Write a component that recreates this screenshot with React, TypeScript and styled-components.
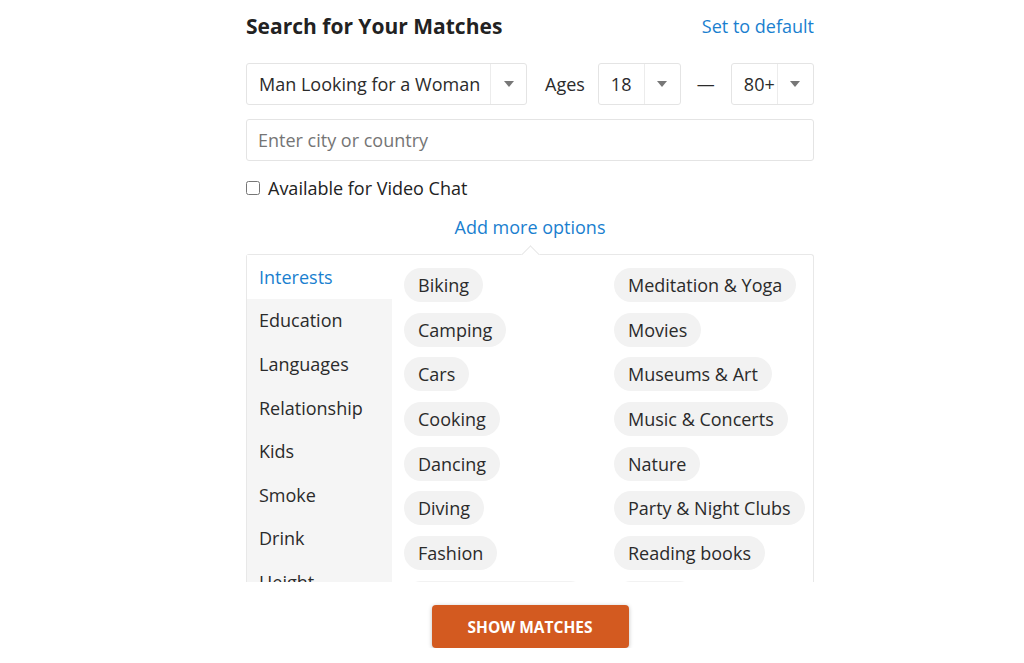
import React from 'react';
import styled, { createGlobalStyle } from 'styled-components';

const GlobalStyle = createGlobalStyle`
  html, body {
    margin: 0;
    padding: 0;
    background: #ffffff;
    font-family: "Open Sans", "Liberation Sans", sans-serif;
    color: #2b2b2b;
  }
`;

const categories = [
  'Interests',
  'Education',
  'Languages',
  'Relationship',
  'Kids',
  'Smoke',
  'Drink',
  'Height',
  'Body type',
];

const leftInterests = [
  'Biking',
  'Camping',
  'Cars',
  'Cooking',
  'Dancing',
  'Diving',
  'Fashion',
  'Fitness & Wellness',
];

const rightInterests = [
  'Meditation & Yoga',
  'Movies',
  'Museums & Art',
  'Music & Concerts',
  'Nature',
  'Party & Night Clubs',
  'Reading books',
  'Sailing',
];

const Caret = () => (
  <svg width="10" height="6" viewBox="0 0 10 6">
    <path d="M0 0 L10 0 L5 6 Z" fill="#777" />
  </svg>
);

const App = () => {
  return (
    <>
      <GlobalStyle />
      <Page>
        <Header>
          <Title>Search for Your Matches</Title>
          <TextLink>Set to default</TextLink>
        </Header>

        <FilterRow>
          <Select $width={281}>
            <SelectValue>Man Looking for a Woman</SelectValue>
            <SelectArrow>
              <Caret />
            </SelectArrow>
          </Select>
          <AgesLabel>Ages</AgesLabel>
          <Select $width={83}>
            <SelectValue>18</SelectValue>
            <SelectArrow>
              <Caret />
            </SelectArrow>
          </Select>
          <Dash>—</Dash>
          <Select $width={83}>
            <SelectValue>80+</SelectValue>
            <SelectArrow>
              <Caret />
            </SelectArrow>
          </Select>
        </FilterRow>

        <CityInput placeholder="Enter city or country" />

        <CheckRow>
          <CheckBox type="checkbox" />
          <span>Available for Video Chat</span>
        </CheckRow>

        <MoreOptions>
          <TextLink>Add more options</TextLink>
        </MoreOptions>

        <Panel>
          <Notch />
          <Sidebar>
            {categories.map((c, i) => (
              <Category key={c} $active={i === 0}>
                {c}
              </Category>
            ))}
          </Sidebar>
          <ChipGrid>
            <ChipColumn>
              {leftInterests.map((t) => (
                <Chip key={t}>{t}</Chip>
              ))}
            </ChipColumn>
            <ChipColumn>
              {rightInterests.map((t) => (
                <Chip key={t}>{t}</Chip>
              ))}
            </ChipColumn>
          </ChipGrid>
        </Panel>

        <Footer>
          <ShowButton>SHOW MATCHES</ShowButton>
        </Footer>
      </Page>
    </>
  );
};

export default App;

const Page = styled.div`
  width: 568px;
  padding: 12px 0 0 246px;
`;

const Header = styled.div`
  display: flex;
  justify-content: space-between;
  align-items: center;
  height: 28px;
`;

const Title = styled.h1`
  margin: 0;
  font-size: 21px;
  font-weight: 700;
  color: #222;
`;

const TextLink = styled.a`
  font-size: 18px;
  color: #1a7fcf;
  cursor: pointer;
`;

const FilterRow = styled.div`
  display: flex;
  align-items: center;
  margin-top: 23px;
  height: 42px;
`;

const Select = styled.div<{ $width: number }>`
  display: flex;
  align-items: stretch;
  width: ${({ $width }) => $width}px;
  height: 42px;
  box-sizing: border-box;
  border: 1px solid #e4e4e4;
  border-radius: 3px;
  background: #fff;
`;

const SelectValue = styled.div`
  flex: 1;
  display: flex;
  align-items: center;
  padding-left: 12px;
  font-size: 18px;
  color: #2b2b2b;
  white-space: nowrap;
`;

const SelectArrow = styled.div`
  width: 35px;
  display: flex;
  align-items: center;
  justify-content: center;
  border-left: 1px solid #ececec;
`;

const AgesLabel = styled.span`
  font-size: 18px;
  margin: 0 13px 0 18px;
`;

const Dash = styled.span`
  width: 50px;
  text-align: center;
  font-size: 18px;
`;

const CityInput = styled.input`
  display: block;
  width: 100%;
  box-sizing: border-box;
  height: 42px;
  margin-top: 14px;
  padding: 0 11px;
  border: 1px solid #e4e4e4;
  border-radius: 3px;
  font-family: inherit;
  font-size: 18px;
  outline: none;

  ::placeholder {
    color: #bbbbbb;
  }
`;

const CheckRow = styled.label`
  display: flex;
  align-items: center;
  gap: 8px;
  margin-top: 15px;
  height: 24px;
  font-size: 18px;
  color: #222;
`;

const CheckBox = styled.input`
  margin: 0;
  width: 14px;
  height: 14px;
`;

const MoreOptions = styled.div`
  display: flex;
  justify-content: center;
  margin-top: 15px;
  height: 24px;
  line-height: 24px;
`;

const Panel = styled.div`
  position: relative;
  display: flex;
  margin-top: 15px;
  height: 327px;
  border: 1px solid #e8e8e8;
  border-bottom: none;
  border-radius: 3px 3px 0 0;
`;

const Notch = styled.div`
  position: absolute;
  top: -7px;
  left: 277px;
  width: 12px;
  height: 12px;
  background: #fff;
  border-top: 1px solid #e8e8e8;
  border-left: 1px solid #e8e8e8;
  transform: rotate(45deg);
`;

const Sidebar = styled.ul`
  list-style: none;
  margin: 0;
  padding: 0;
  width: 145px;
  flex-shrink: 0;
  background: #f5f5f5;
  overflow: hidden;
`;

const Category = styled.li<{ $active: boolean }>`
  height: 43.6px;
  display: flex;
  align-items: center;
  padding-left: 12px;
  font-size: 18px;
  background: ${({ $active }) => ($active ? '#fff' : 'transparent')};
  color: ${({ $active }) => ($active ? '#1a7fcf' : '#2b2b2b')};
`;

const ChipGrid = styled.div`
  flex: 1;
  display: grid;
  grid-template-columns: 210px 1fr;
  padding: 13px 0 0 12px;
  overflow: hidden;
`;

const ChipColumn = styled.div`
  display: flex;
  flex-direction: column;
  align-items: flex-start;
  gap: 10.7px;
`;

const Chip = styled.span`
  display: inline-flex;
  align-items: center;
  height: 34px;
  padding: 0 14px;
  border-radius: 17px;
  background: #f2f2f2;
  font-size: 18px;
  color: #2b2b2b;
  white-space: nowrap;
`;

const Footer = styled.div`
  display: flex;
  justify-content: center;
  margin-top: 23px;
`;

const ShowButton = styled.button`
  width: 197px;
  height: 43px;
  border: none;
  border-radius: 4px;
  background: #d35a20;
  color: #fff;
  font-family: inherit;
  font-size: 15.5px;
  font-weight: 700;
  box-shadow: 0 1px 4px rgba(0, 0, 0, 0.25);
  cursor: pointer;
`;
